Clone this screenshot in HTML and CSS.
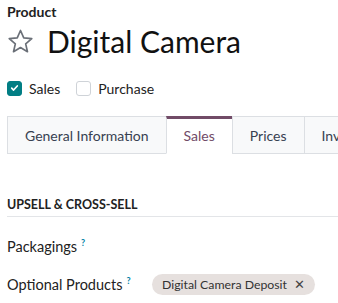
FILE: index.html
```html
<!DOCTYPE html>
<html>
<head>
<meta charset="utf-8">
<link rel="stylesheet" href="styles.css">
</head>
<body>
<div class="page">
  <div class="label">Product</div>
  <div class="title-row">
    <svg class="star" viewBox="0 0 24 24" width="27" height="27"><path d="M12 2.2l2.9 6.6 7.1.6-5.4 4.7 1.6 7-6.2-3.7-6.2 3.7 1.6-7L2 9.4l7.1-.6z" fill="none" stroke="#6b7078" stroke-width="1.5" stroke-linejoin="round"/></svg>
    <h1 class="title">Digital Camera</h1>
  </div>
  <div class="checks">
    <div class="check"><span class="box on"><svg viewBox="0 0 14 14" width="14" height="14"><path d="M4 7.2l2 2 4-4.4" fill="none" stroke="#fff" stroke-width="1.8" stroke-linecap="round" stroke-linejoin="round"/></svg></span><span>Sales</span></div>
    <div class="check"><span class="box"></span><span>Purchase</span></div>
  </div>
  <div class="tabs">
    <div class="tab">General Information</div>
    <div class="tab active">Sales</div>
    <div class="tab">Prices</div>
    <div class="tab">Inventory</div>
  </div>
  <div class="section">
    <div class="section-title">UPSELL &amp; CROSS-SELL</div>
    <div class="field"><span class="flabel">Packagings<sup class="help">?</sup></span></div>
    <div class="field"><span class="flabel">Optional Products<sup class="help">?</sup></span><span class="tag">Digital Camera Deposit<span class="x">✕</span></span></div>
  </div>
</div>
</body>
</html>
```
FILE: styles.css
```css
html, body { margin: 0; padding: 0; background: #fff; }
body { font-family: "Lato", "Liberation Sans", sans-serif; color: #222; overflow: hidden; width: 338px; height: 303px; }
.page { padding: 2px 0 0 7px; width: 400px; }
.label { font-size: 14px; font-weight: 700; line-height: 20px; color: #222; }
.title-row { display: flex; align-items: center; gap: 13px; height: 34px; margin-top: 2px; }
.star { flex: none; }
.title { margin: 0; font-size: 30px; font-weight: 400; line-height: 34px; color: #111; }
.checks { display: flex; gap: 16px; margin-top: 22px; height: 16px; align-items: center; font-size: 14px; }
.check { display: flex; align-items: center; gap: 7px; }
.box { width: 13px; height: 13px; border: 1px solid #cfd3d8; border-radius: 3px; display: flex; align-items: center; justify-content: center; background: #fff; }
.box.on { background: #017e84; border-color: #017e84; }
.tabs { display: flex; margin-top: 20px; height: 38px; font-size: 14px; }
.tab { box-sizing: border-box; padding: 0 17px; display: flex; align-items: center; background: #f8f9fa; border: 1px solid #dcdfe3; border-right: none; color: #374151; white-space: nowrap; }
.tab.active { background: #fff; color: #714b67; border-top: 3px solid #714b67; border-bottom: 1px solid #fff; padding-bottom: 2px; }
.section { width: 331px; }
.section-title { margin-top: 43px; font-size: 12.5px; font-weight: 700; line-height: 15px; padding-bottom: 4px; border-bottom: 1px solid #e3e5e8; color: #222; }
.field { display: flex; align-items: center; height: 22px; font-size: 14.5px; margin-top: 18px; }
.field + .field { margin-top: 16px; }
.flabel { width: 145px; flex: none; }
.help { color: #0180a5; font-size: 9px; margin-left: 4px; font-weight: 700; vertical-align: 6px; }
.tag { display: inline-flex; align-items: center; height: 21px; padding: 0 10px; border-radius: 11px; background: #e6e0de; font-size: 12.3px; color: #333; }
.x { margin-left: 7px; font-size: 13px; color: #444; }
```
